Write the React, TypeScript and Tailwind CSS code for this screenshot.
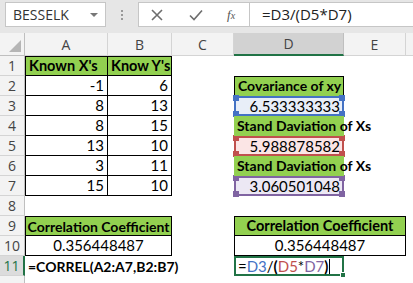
const cellFont = { fontFamily: '"Lato", "Liberation Sans", sans-serif' };

function Corners({ color }: { color: string }) {
  const sq = `absolute w-[6px] h-[6px] ${color}`;
  return (
    <>
      <span className={`${sq} -left-[3px] -top-[3px]`} />
      <span className={`${sq} -right-[3px] -top-[3px]`} />
      <span className={`${sq} -left-[3px] -bottom-[3px]`} />
      <span className={`${sq} -right-[3px] -bottom-[3px]`} />
    </>
  );
}

function RowHead({ n, active }: { n?: number; active?: boolean }) {
  return (
    <div
      className={`flex items-center justify-center border-b border-[#d4d4d4] text-[14px] ${
        active ? "bg-[#dcdcdc] text-[#217346] border-r-2 border-r-[#217346]" : "bg-[#f3f3f3] text-[#444] border-r border-r-[#bfbfbf]"
      }`}
      style={{ fontFamily: '"Open Sans", sans-serif' }}
    >
      {n}
    </div>
  );
}

const Blank = () => <div />;

export default function App() {
  const numA = ["-1", "8", "8", "13", "3", "15"];
  const numB = ["6", "13", "15", "10", "11", "10"];

  return (
    <div className="w-[413px] h-[283px] overflow-hidden bg-white select-none" style={cellFont}>
      {/* formula bar */}
      <div className="h-[33px] bg-[#e6e6e6] flex items-start pt-[2px] pl-[5px]">
        <div className="w-[101px] h-[25px] bg-white border border-[#c6c6c6] flex items-center justify-between px-[7px]">
          <span className="text-[14px] text-[#333]" style={{ fontFamily: '"Open Sans", sans-serif' }}>BESSELK</span>
          <span className="w-0 h-0 border-x-[4px] border-x-transparent border-t-[4px] border-t-[#777]" />
        </div>
        <div className="w-[32px] h-[25px] flex flex-col items-center justify-center gap-[2px]">
          <span className="w-[2px] h-[2px] bg-[#999]" />
          <span className="w-[2px] h-[2px] bg-[#999]" />
          <span className="w-[2px] h-[2px] bg-[#999]" />
        </div>
        <div className="w-[111px] h-[25px] bg-white border border-[#c6c6c6] border-r-0 flex items-center text-[#777]">
          <svg className="ml-[12px]" width="12" height="12" viewBox="0 0 12 12">
            <path d="M1 1 L11 11 M11 1 L1 11" stroke="#6d6d6d" strokeWidth="1.6" />
          </svg>
          <svg className="ml-[26px]" width="14" height="12" viewBox="0 0 14 12">
            <path d="M1 6.5 L5 10.5 L13 1.5" stroke="#6d6d6d" strokeWidth="1.6" fill="none" />
          </svg>
          <span className="ml-[24px] text-[13px] italic text-[#555]" style={{ fontFamily: '"Liberation Serif", serif' }}>
            f<span className="text-[10px]">x</span>
          </span>
        </div>
        <div className="flex-1 h-[25px] bg-white border border-[#c6c6c6] border-r-0 flex items-center pl-[12px]">
          <span className="text-[15px] text-[#222]" style={{ fontFamily: '"Open Sans", sans-serif' }}>=D3/(D5*D7)</span>
        </div>
      </div>

      {/* column headers */}
      <div
        className="grid grid-cols-[25px_83px_64px_62px_110px_62px_1fr] h-[23px] text-[14px] text-[#444]"
        style={{ fontFamily: '"Open Sans", sans-serif' }}
      >
        <div className="bg-[#f3f3f3] border-r border-b border-[#bfbfbf] flex items-end justify-end p-[3px]">
          <span className="w-0 h-0 border-l-[12px] border-l-transparent border-b-[12px] border-b-[#b5b5b5]" />
        </div>
        {["A", "B", "C"].map((c) => (
          <div key={c} className="bg-[#f3f3f3] border-r border-b border-[#d4d4d4] flex items-center justify-center">{c}</div>
        ))}
        <div className="bg-[#d2d2d2] border-r border-[#bfbfbf] border-b-2 border-b-[#217346] flex items-center justify-center">D</div>
        <div className="bg-[#f3f3f3] border-r border-b border-[#d4d4d4] flex items-center justify-center">E</div>
        <div className="bg-[#f3f3f3] border-b border-[#d4d4d4]" />
      </div>

      {/* sheet */}
      <div className="grid grid-cols-[25px_83px_64px_62px_110px_62px_1fr] auto-rows-[20px] text-[15px] text-black">
        {/* row 1 */}
        <RowHead n={1} />
        <div className="bg-[#92d050] border border-black font-bold text-[14.5px] px-[3px] flex items-center whitespace-nowrap">Known X's</div>
        <div className="bg-[#92d050] border-y border-r border-black font-bold text-[14.5px] px-[3px] flex items-center whitespace-nowrap">Know Y's</div>
        <Blank /><Blank /><Blank /><Blank />

        {/* rows 2-7 */}
        {numA.map((a, i) => {
          const r = i + 2;
          let d: JSX.Element = <Blank />;
          if (r === 2)
            d = <div className="bg-[#92d050] border border-black border-b-0 font-bold text-[14px] px-[3px] flex items-end whitespace-nowrap">Covariance of xy</div>;
          if (r === 3)
            d = (
              <div className="relative bg-[#e8eef8] border-2 border-[#4472c4] flex items-center justify-end pr-[2px]">
                6.533333333
                <Corners color="bg-[#4472c4]" />
              </div>
            );
          if (r === 4 || r === 6)
            d = <div className="relative z-10 bg-[#92d050] font-bold text-[14px] px-[3px] flex items-end whitespace-nowrap overflow-visible">Stand Daviation of Xs</div>;
          if (r === 5)
            d = (
              <div className="relative bg-[#fbe5e5] border-2 border-[#c0504d] flex items-center justify-end pr-[2px]">
                5.988878582
                <Corners color="bg-[#c0504d]" />
              </div>
            );
          if (r === 7)
            d = (
              <div className="relative bg-[#ece8f4] border-2 border-[#8064a2] flex items-center justify-end pr-[2px]">
                3.060501048
                <Corners color="bg-[#8064a2]" />
              </div>
            );
          return [
            <RowHead key={`h${r}`} n={r} />,
            <div key={`a${r}`} className="border-x border-b border-black flex items-center justify-end px-[3px]">{a}</div>,
            <div key={`b${r}`} className="border-r border-b border-black flex items-center justify-end px-[3px]">{numB[i]}</div>,
            <Blank key={`c${r}`} />,
            <div key={`d${r}`} className="contents">{d}</div>,
            <Blank key={`e${r}`} />,
            <Blank key={`f${r}`} />,
          ];
        })}

        {/* row 8 */}
        <RowHead n={8} />
        <Blank /><Blank /><Blank /><Blank /><Blank /><Blank />

        {/* row 9 */}
        <RowHead n={9} />
        <div className="col-span-2 bg-[#92d050] border border-black font-bold text-[14px] flex items-center justify-center whitespace-nowrap">Correlation Coefficient</div>
        <Blank />
        <div className="col-span-2 bg-[#92d050] border border-black font-bold text-[14.5px] flex items-center justify-center whitespace-nowrap">Correlation Coefficient</div>
        <Blank />

        {/* row 10 */}
        <RowHead n={10} />
        <div className="col-span-2 border-x border-b border-black flex items-center justify-center">0.356448487</div>
        <Blank />
        <div className="col-span-2 border-x border-b border-black flex items-center justify-center">0.356448487</div>
        <Blank />

        {/* row 11 */}
        <RowHead n={11} active />
        <div className="relative z-10 font-bold text-[14px] px-[3px] flex items-center whitespace-nowrap">=CORREL(A2:A7,B2:B7)</div>
        <Blank /><Blank />
        <div className="relative border-2 border-[#217346] flex items-center px-[2px] whitespace-nowrap">
          <span>=</span>
          <span className="text-[#4472c4]">D3</span>
          <span>/</span>
          <span className="font-bold">(</span>
          <span className="text-[#c0504d]">D5</span>
          <span>*</span>
          <span className="text-[#8064a2]">D7</span>
          <span className="font-bold">)</span>
          <span className="ml-[1px] w-[1px] h-[15px] bg-black" />
          <span className="absolute -right-[4px] -bottom-[4px] w-[6px] h-[6px] bg-[#217346] border border-white" />
        </div>
        <Blank /><Blank />

        {/* row 12 */}
        <RowHead />
      </div>
    </div>
  );
}
